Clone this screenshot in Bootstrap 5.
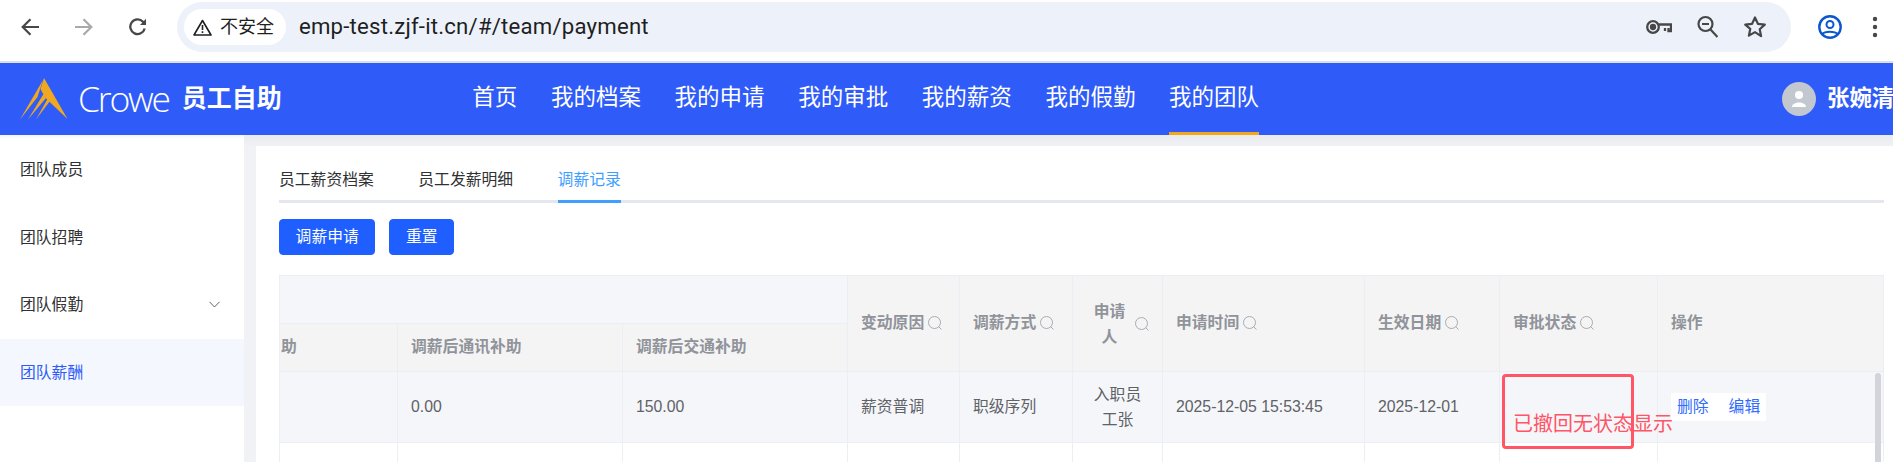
<!DOCTYPE html>
<html lang="zh-CN">
<head>
<meta charset="utf-8">
<title>调薪记录</title>
<link href="https://cdn.jsdelivr.net/npm/bootstrap@5.3.0/dist/css/bootstrap.min.css" rel="stylesheet">
<style>
html,body{height:462px;overflow:hidden;background:#fff}
body{font-family:"Liberation Sans","Noto Sans CJK SC",sans-serif;font-size:15.8px;width:1893px}
.chrome-bar{height:63px;border-bottom:2px solid #dfe1e5;background:#fff;padding:0 0 7px 21px}
.tool-icon{flex:none;display:block}
.gap-back{margin-right:36px}
.omni{margin-left:30px;width:1614px;height:50px;border-radius:25px;background:#edf2fa;padding:0 24px 0 7px}
.chip{width:102px;height:36px;border-radius:18px;background:#fff;padding-left:9px;gap:8px;font-size:18px;color:#1f1f1f;line-height:1}
.url{font-family:Roboto,"Liberation Sans",sans-serif;font-size:22.2px;color:#1f1f1f;margin-left:13px;letter-spacing:.2px}
.omni-tools{gap:25px}
.prof{margin-left:27px;margin-right:30px}
.topbar{height:72px;background:#2f5cf8;color:#fff;position:relative;padding-left:20px}
.crowe{font-family:"Open Sans",sans-serif;font-weight:300;font-size:35.5px;letter-spacing:-2.2px;margin-left:10px;line-height:1}
.app-name{font-size:25px;font-weight:700;margin-left:13px;white-space:nowrap}
.main-nav{margin-left:190.5px;gap:33.600px;height:72px}
.main-nav a{color:#fff;text-decoration:none;font-size:22.500px;line-height:70px;height:72px;white-space:nowrap;display:block}
.main-nav a.cur{border-bottom:3px solid #f2a81d}
.user-box{margin-left:auto;width:111px;flex:none;gap:11px;white-space:nowrap;overflow:hidden}
.user-ava{width:34px;height:34px;flex:none;border-radius:50%;background:#c3c7d0}
.user-name{font-size:22.400px;font-weight:700}
.layout{height:327px;background:#f0f2f5}
.side{width:244px;flex:none;background:#fff;padding-top:1px;box-shadow:inset 0 6px 6px -6px rgba(0,0,0,.08)}
.side-item{height:67.600px;padding:0 24px 0 20px;color:#303133;position:relative}
.side-item.sel{background:#f4f7fe;color:#2f5cf8}
.content{flex:1;padding:11px 0 0 12px;background:linear-gradient(#e9ebee,#f0f2f5 12px)}
.panel{height:100%;background:#fff;padding:0 10px 0 23px}
.tabs-row{height:57px;border-bottom:3px solid #e4e7ed;gap:44.500px}
.tab-item{height:57px;line-height:68px;color:#303133;margin-bottom:-3px;border-bottom:3px solid transparent;white-space:nowrap}
.tab-item.on{color:#409eff;border-bottom-color:#409eff}
.act-row{margin-top:16px;gap:14px;margin-bottom:20px;height:36px}
.btn.act-btn{height:36px;padding:0 15.6px;background:#1f5fff;border:1px solid #1f5fff;color:#fff;border-radius:4px;font-size:15.800px;line-height:32px}
.grid-wrap{position:relative;height:187px;overflow:hidden}
.table.pay-grid{table-layout:fixed;width:1604px;border-color:#ebeef5;margin:0}
.table.pay-grid>*>*>*{padding:0 13px;vertical-align:middle;border-color:#ebeef5;font-size:15.800px;box-shadow:none}
.table.pay-grid th{background:#f4f4f5;color:#909399;font-weight:700}
.table.pay-grid th.grp{background:#f5f6fa}
.table.pay-grid th.clip{padding-left:1px;text-align:left}
.table.pay-grid td{color:#606266;background:#fff}
.table.pay-grid tr.hl td{background:#f5f6fa}
.h1{height:48px}.h2{height:48px}.hb{height:71px}.he{height:71px}
.sicon{display:inline-block;vertical-align:-2px;margin-left:4px}
.who{display:flex;align-items:center;gap:4px;padding-left:2px}
.who span{flex:1;text-align:center;line-height:25px;font-weight:700}
.table.pay-grid td.cell-c{text-align:center;line-height:25px;padding:0 4px}
.ops{background:#fff;display:inline-flex;gap:20px;padding:0 6px;height:28px;line-height:28px;color:#2f6bff}
.v-scroll{position:absolute;right:3px;top:98px;width:6px;height:90px;border-radius:3px 3px 0 0;background:#d3d4d9}
.note-box{position:absolute;left:1502px;top:374px;width:132px;height:75px;border:3px solid #ff5566;border-radius:4px;pointer-events:none}
.note-text{position:absolute;left:1513px;top:411px;font-size:20px;line-height:26px;color:#ff5566;white-space:nowrap}
</style>
</head>
<body>
<div class="chrome-bar d-flex align-items-center">
  <svg class="tool-icon gap-back" width="18" height="18" viewBox="0 0 18 18" fill="none" stroke="#474747" stroke-width="2.200"><path d="M18 9H2M9.500 1.200 1.700 9l7.800 7.800"/></svg>
  <svg class="tool-icon gap-back" width="18" height="18" viewBox="0 0 18 18" fill="none" stroke="#a9a9a9" stroke-width="2.200"><path d="M0 9h16M8.500 1.200 16.300 9l-7.800 7.800"/></svg>
  <svg class="tool-icon" width="18" height="18" viewBox="0 0 18 18" fill="none" stroke="#474747" stroke-width="2.300"><path d="M15.700 10.500A7.300 7.300 0 1 1 14 3.800L16 6"/><path d="M17 .8V7h-6z" fill="#474747" stroke="none"/></svg>
  <div class="omni d-flex align-items-center">
    <div class="chip d-flex align-items-center">
      <svg width="19" height="17" viewBox="0 0 19 17" fill="none" stroke="#1f1f1f" stroke-width="1.600"><path d="M9.500 1.500 18 16H1z" stroke-linejoin="round"/><path d="M9.500 6v5M9.500 12.300v1.700"/></svg>
      <span>不安全</span>
    </div>
    <span class="url">emp-test.zjf-it.cn/#/team/payment</span>
    <div class="omni-tools ms-auto d-flex align-items-center">
      <svg width="26" height="14" viewBox="0 0 26 14" fill="none" stroke="#474747" stroke-width="2.300"><circle cx="7" cy="7" r="5.800"/><circle cx="7" cy="7" r="2" fill="#474747"/><path d="M13 4.500h12v6.500h-2.500V8M19 8v3"/></svg>
      <svg width="21" height="24" viewBox="0 0 21 24" fill="none" stroke="#474747" stroke-width="2.200"><circle cx="8.500" cy="9" r="7"/><path d="M5 9h7M13.500 14.500 20.500 22"/></svg>
      <svg width="24" height="24" viewBox="0 0 24 24" fill="none" stroke="#474747" stroke-width="2.200" stroke-linejoin="round"><path d="M12 2.500l2.900 6.300 6.900.8-5.100 4.700 1.400 6.800L12 17.100l-6.100 3.500 1.400-6.800L2.200 9.600l6.900-.8z"/></svg>
    </div>
  </div>
  <svg class="tool-icon prof" width="24" height="24" viewBox="0 0 24 24" fill="none" stroke="#0b57d0"><circle cx="12" cy="12" r="10.700" stroke-width="2.400"/><circle cx="12" cy="9.500" r="3.500" stroke-width="2"/><path d="M4.500 19c2-3 12.500-3 15 0" stroke-width="2"/></svg>
  <svg class="tool-icon" width="6" height="22" viewBox="0 0 6 22" fill="#474747"><circle cx="3" cy="3" r="2.200"/><circle cx="3" cy="11" r="2.200"/><circle cx="3" cy="19" r="2.200"/></svg>
</div>

<header class="topbar d-flex align-items-center">
  <svg width="48" height="42" viewBox="0 0 48 42" class="flex-shrink-0">
    <path fill="#f0a820" d="M24 0 47.500 41 26.500 21 24 17.500 20.500 11z"/>
    <path fill="#f0a820" d="M23 2 0 41.500 17.500 19z"/>
    <path fill="#f0a820" d="M23.500 16 8 41.500 26 20z"/>
    <path fill="#f0a820" d="M27.500 21 16 41.500 30 23z"/>
  </svg>
  <span class="crowe">Crowe</span>
  <span class="app-name">员工自助</span>
  <nav class="main-nav d-flex">
    <a href="#">首页</a><a href="#">我的档案</a><a href="#">我的申请</a><a href="#">我的审批</a><a href="#">我的薪资</a><a href="#">我的假勤</a><a href="#" class="cur">我的团队</a>
  </nav>
  <div class="user-box d-flex align-items-center">
    <div class="user-ava d-flex align-items-center justify-content-center">
      <svg width="16" height="18" viewBox="0 0 16 18" fill="#fff"><circle cx="8" cy="5" r="4"/><path d="M1 17c0-6 14-6 14 0z"/></svg>
    </div>
    <span class="user-name">张婉清</span>
  </div>
</header>

<div class="layout d-flex">
  <aside class="side">
    <div class="side-item d-flex align-items-center">团队成员</div>
    <div class="side-item d-flex align-items-center">团队招聘</div>
    <div class="side-item d-flex align-items-center justify-content-between">团队假勤
      <svg width="11" height="7" viewBox="0 0 11 7" fill="none" stroke="#606266" stroke-width="1"><path d="M.5.800 5.500 6l5-5.200"/></svg>
    </div>
    <div class="side-item sel d-flex align-items-center">团队薪酬</div>
  </aside>
  <main class="content">
    <div class="panel">
      <div class="tabs-row d-flex">
        <div class="tab-item">员工薪资档案</div>
        <div class="tab-item">员工发薪明细</div>
        <div class="tab-item on">调薪记录</div>
      </div>
      <div class="act-row d-flex">
        <button type="button" class="btn act-btn">调薪申请</button>
        <button type="button" class="btn act-btn">重置</button>
      </div>
      <div class="grid-wrap">
        <table class="table table-bordered pay-grid">
          <colgroup>
            <col style="width:118px"><col style="width:225px"><col style="width:225px"><col style="width:112px"><col style="width:113px"><col style="width:90px"><col style="width:202px"><col style="width:135px"><col style="width:158px"><col style="width:226px">
          </colgroup>
          <thead>
            <tr class="h1">
              <th colspan="3" class="grp"></th>
              <th rowspan="2">变动原因<svg class="sicon" width="14" height="14" viewBox="0 0 14 14" fill="none" stroke="#a8abb2"><circle cx="6.500" cy="6.500" r="6"/><path d="m10.500 10.500 3 3"/></svg></th>
              <th rowspan="2">调薪方式<svg class="sicon" width="14" height="14" viewBox="0 0 14 14" fill="none" stroke="#a8abb2"><circle cx="6.500" cy="6.500" r="6"/><path d="m10.500 10.500 3 3"/></svg></th>
              <th rowspan="2"><div class="who"><span>申请人</span><svg width="14" height="14" viewBox="0 0 14 14" fill="none" stroke="#a8abb2" class="flex-shrink-0"><circle cx="6.500" cy="6.500" r="6"/><path d="m10.500 10.500 3 3"/></svg></div></th>
              <th rowspan="2">申请时间<svg class="sicon" width="14" height="14" viewBox="0 0 14 14" fill="none" stroke="#a8abb2"><circle cx="6.500" cy="6.500" r="6"/><path d="m10.500 10.500 3 3"/></svg></th>
              <th rowspan="2">生效日期<svg class="sicon" width="14" height="14" viewBox="0 0 14 14" fill="none" stroke="#a8abb2"><circle cx="6.500" cy="6.500" r="6"/><path d="m10.500 10.500 3 3"/></svg></th>
              <th rowspan="2">审批状态<svg class="sicon" width="14" height="14" viewBox="0 0 14 14" fill="none" stroke="#a8abb2"><circle cx="6.500" cy="6.500" r="6"/><path d="m10.500 10.500 3 3"/></svg></th>
              <th rowspan="2">操作</th>
            </tr>
            <tr class="h2">
              <th class="clip">助</th>
              <th>调薪后通讯补助</th>
              <th>调薪后交通补助</th>
            </tr>
          </thead>
          <tbody>
            <tr class="hb hl">
              <td></td><td>0.00</td><td>150.00</td><td>薪资普调</td><td>职级序列</td>
              <td class="cell-c">入职员<br>工张</td>
              <td>2025-12-05 15:53:45</td><td>2025-12-01</td><td></td>
              <td><span class="ops"><span>删除</span><span>编辑</span></span></td>
            </tr>
            <tr class="he"><td></td><td></td><td></td><td></td><td></td><td></td><td></td><td></td><td></td><td></td></tr>
          </tbody>
        </table>
        <div class="v-scroll"></div>
      </div>
    </div>
  </main>
</div>
<div class="note-box"></div>
<div class="note-text">已撤回无状态显示</div>
<script src="https://cdn.jsdelivr.net/npm/bootstrap@5.3.0/dist/js/bootstrap.bundle.min.js"></script>
</body>
</html>
